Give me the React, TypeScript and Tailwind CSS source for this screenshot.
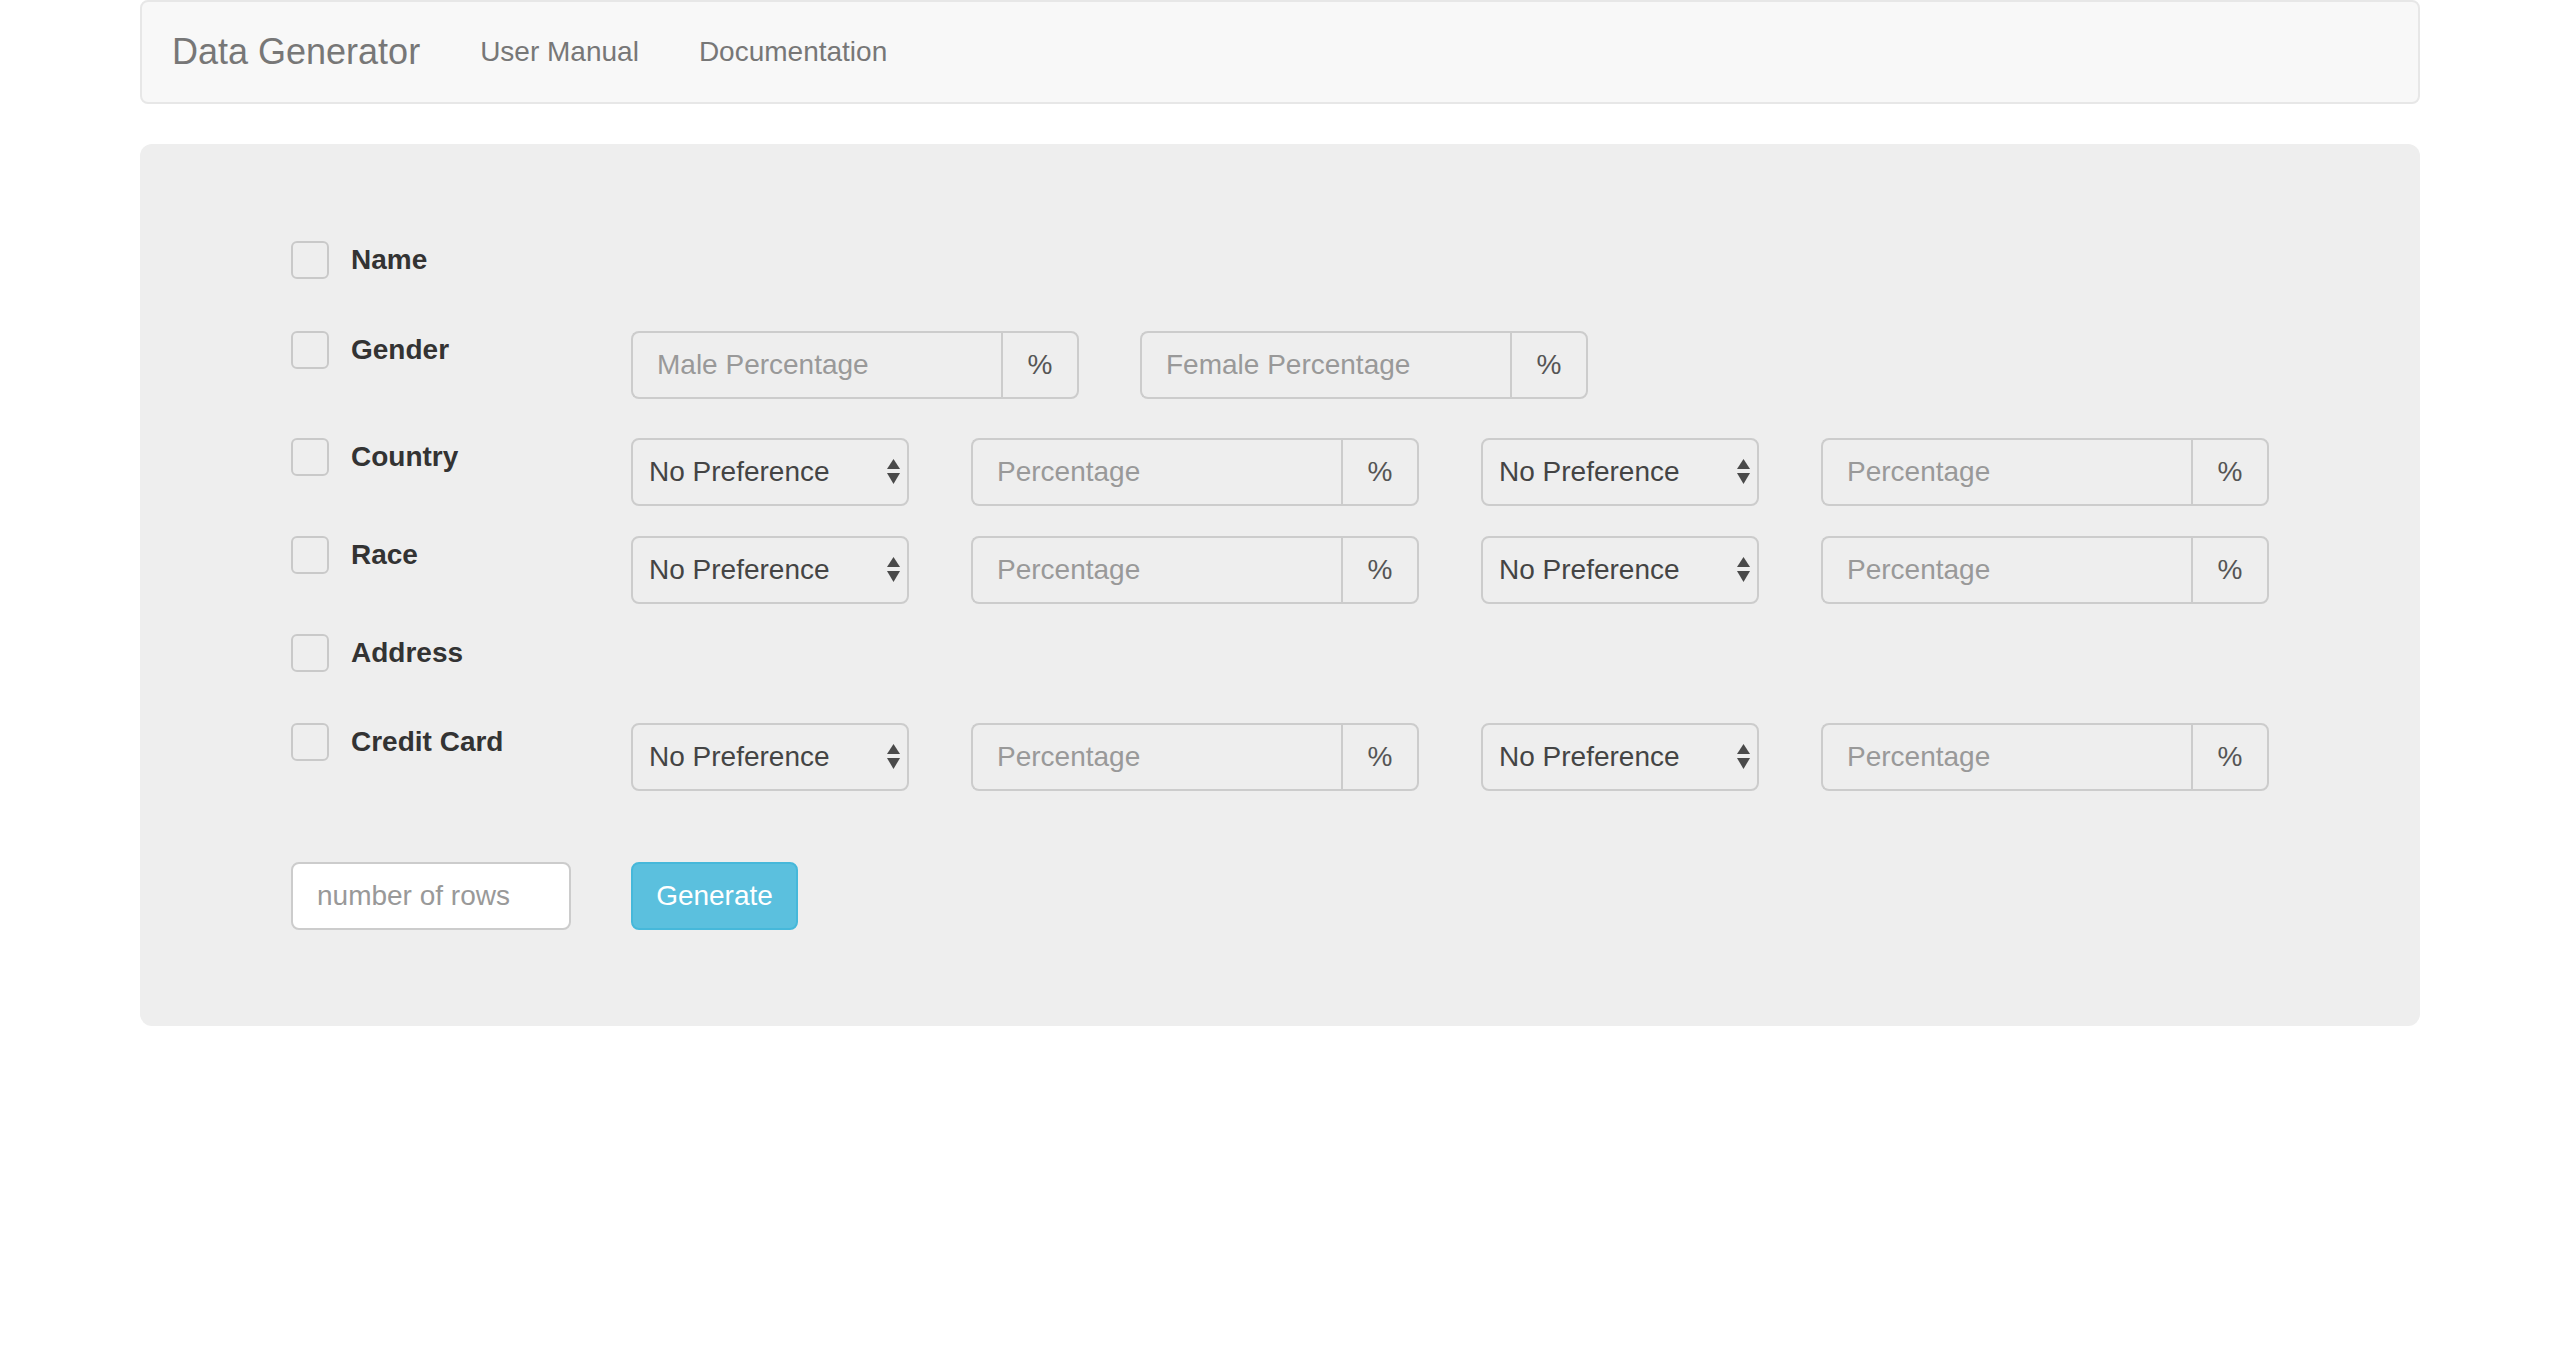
import React from "react";

function Checkbox() {
  return (
    <span className="block w-[38px] h-[38px] shrink-0 rounded-[6px] border-2 border-[#c9c9c9] bg-[#eeeeee]" />
  );
}

function Label({ text }: { text: string }) {
  return (
    <div className="w-[340px] h-[38px] shrink-0 flex items-center gap-[22px]">
      <Checkbox />
      <span className="text-[28px] font-bold text-[#333333] leading-none">{text}</span>
    </div>
  );
}

function PercentGroup({ placeholder }: { placeholder: string }) {
  return (
    <div className="w-[448px] h-[68px] flex">
      <input
        disabled
        placeholder={placeholder}
        className="w-[370px] h-full border-2 border-r-0 border-[#cccccc] rounded-l-[8px] bg-[#eeeeee] pl-[24px] text-[28px] text-[#555555] placeholder:text-[#999999] outline-none"
      />
      <div className="w-[78px] h-full border-2 border-[#cccccc] rounded-r-[8px] bg-[#eeeeee] flex items-center justify-center text-[28px] text-[#555555]">
        %
      </div>
    </div>
  );
}

function Select() {
  return (
    <div className="relative w-[278px] h-[68px]">
      <select
        defaultValue="np"
        className="appearance-none w-full h-full border-2 border-[#cccccc] rounded-[8px] bg-[#eeeeee] pl-[16px] text-[28px] text-[#444444] outline-none"
      >
        <option value="np">No Preference</option>
      </select>
      <svg
        className="absolute right-[9px] top-[21px] pointer-events-none"
        width="13"
        height="25"
        viewBox="0 0 13 25"
      >
        <polygon points="0,10 6.5,0 13,10" fill="#4a4a4a" />
        <polygon points="0,14 13,14 6.5,25" fill="#4a4a4a" />
      </svg>
    </div>
  );
}

function FourCols() {
  return (
    <div className="flex gap-[62px]">
      <Select />
      <PercentGroup placeholder="Percentage" />
      <Select />
      <PercentGroup placeholder="Percentage" />
    </div>
  );
}

export default function App() {
  return (
    <div className="w-full min-h-[1364px] bg-white [font-family:Liberation_Sans,Arial,Helvetica,sans-serif]">
      <div className="w-[2280px] mx-auto">
        <nav className="h-[104px] border-2 border-[#e7e7e7] bg-[#f8f8f8] rounded-[8px] flex items-center">
          <span className="px-[30px] text-[36px] text-[#777777] leading-none">Data Generator</span>
          <span className="px-[30px] text-[28px] text-[#777777] leading-none">User Manual</span>
          <span className="px-[30px] text-[28px] text-[#777777] leading-none">Documentation</span>
        </nav>

        <div className="mt-[40px] bg-[#eeeeee] rounded-[12px] pt-[97px] pb-[96px] px-[151px]">
          <div className="flex h-[38px] mb-[52px]">
            <Label text="Name" />
          </div>

          <div className="flex h-[68px] mb-[39px]">
            <Label text="Gender" />
            <div className="flex gap-[61px]">
              <PercentGroup placeholder="Male Percentage" />
              <PercentGroup placeholder="Female Percentage" />
            </div>
          </div>

          <div className="flex h-[68px] mb-[30px]">
            <Label text="Country" />
            <FourCols />
          </div>

          <div className="flex h-[68px] mb-[30px]">
            <Label text="Race" />
            <FourCols />
          </div>

          <div className="flex h-[38px] mb-[51px]">
            <Label text="Address" />
          </div>

          <div className="flex h-[68px] mb-[71px]">
            <Label text="Credit Card" />
            <FourCols />
          </div>

          <div className="flex h-[68px] gap-[60px]">
            <input
              placeholder="number of rows"
              className="w-[280px] h-full border-2 border-[#cccccc] rounded-[8px] bg-white pl-[24px] text-[28px] text-[#555555] placeholder:text-[#999999] outline-none"
            />
            <button className="w-[167px] h-full border-2 border-[#46b8da] rounded-[8px] bg-[#5bc0de] text-white text-[28px]">
              Generate
            </button>
          </div>
        </div>
      </div>
    </div>
  );
}
